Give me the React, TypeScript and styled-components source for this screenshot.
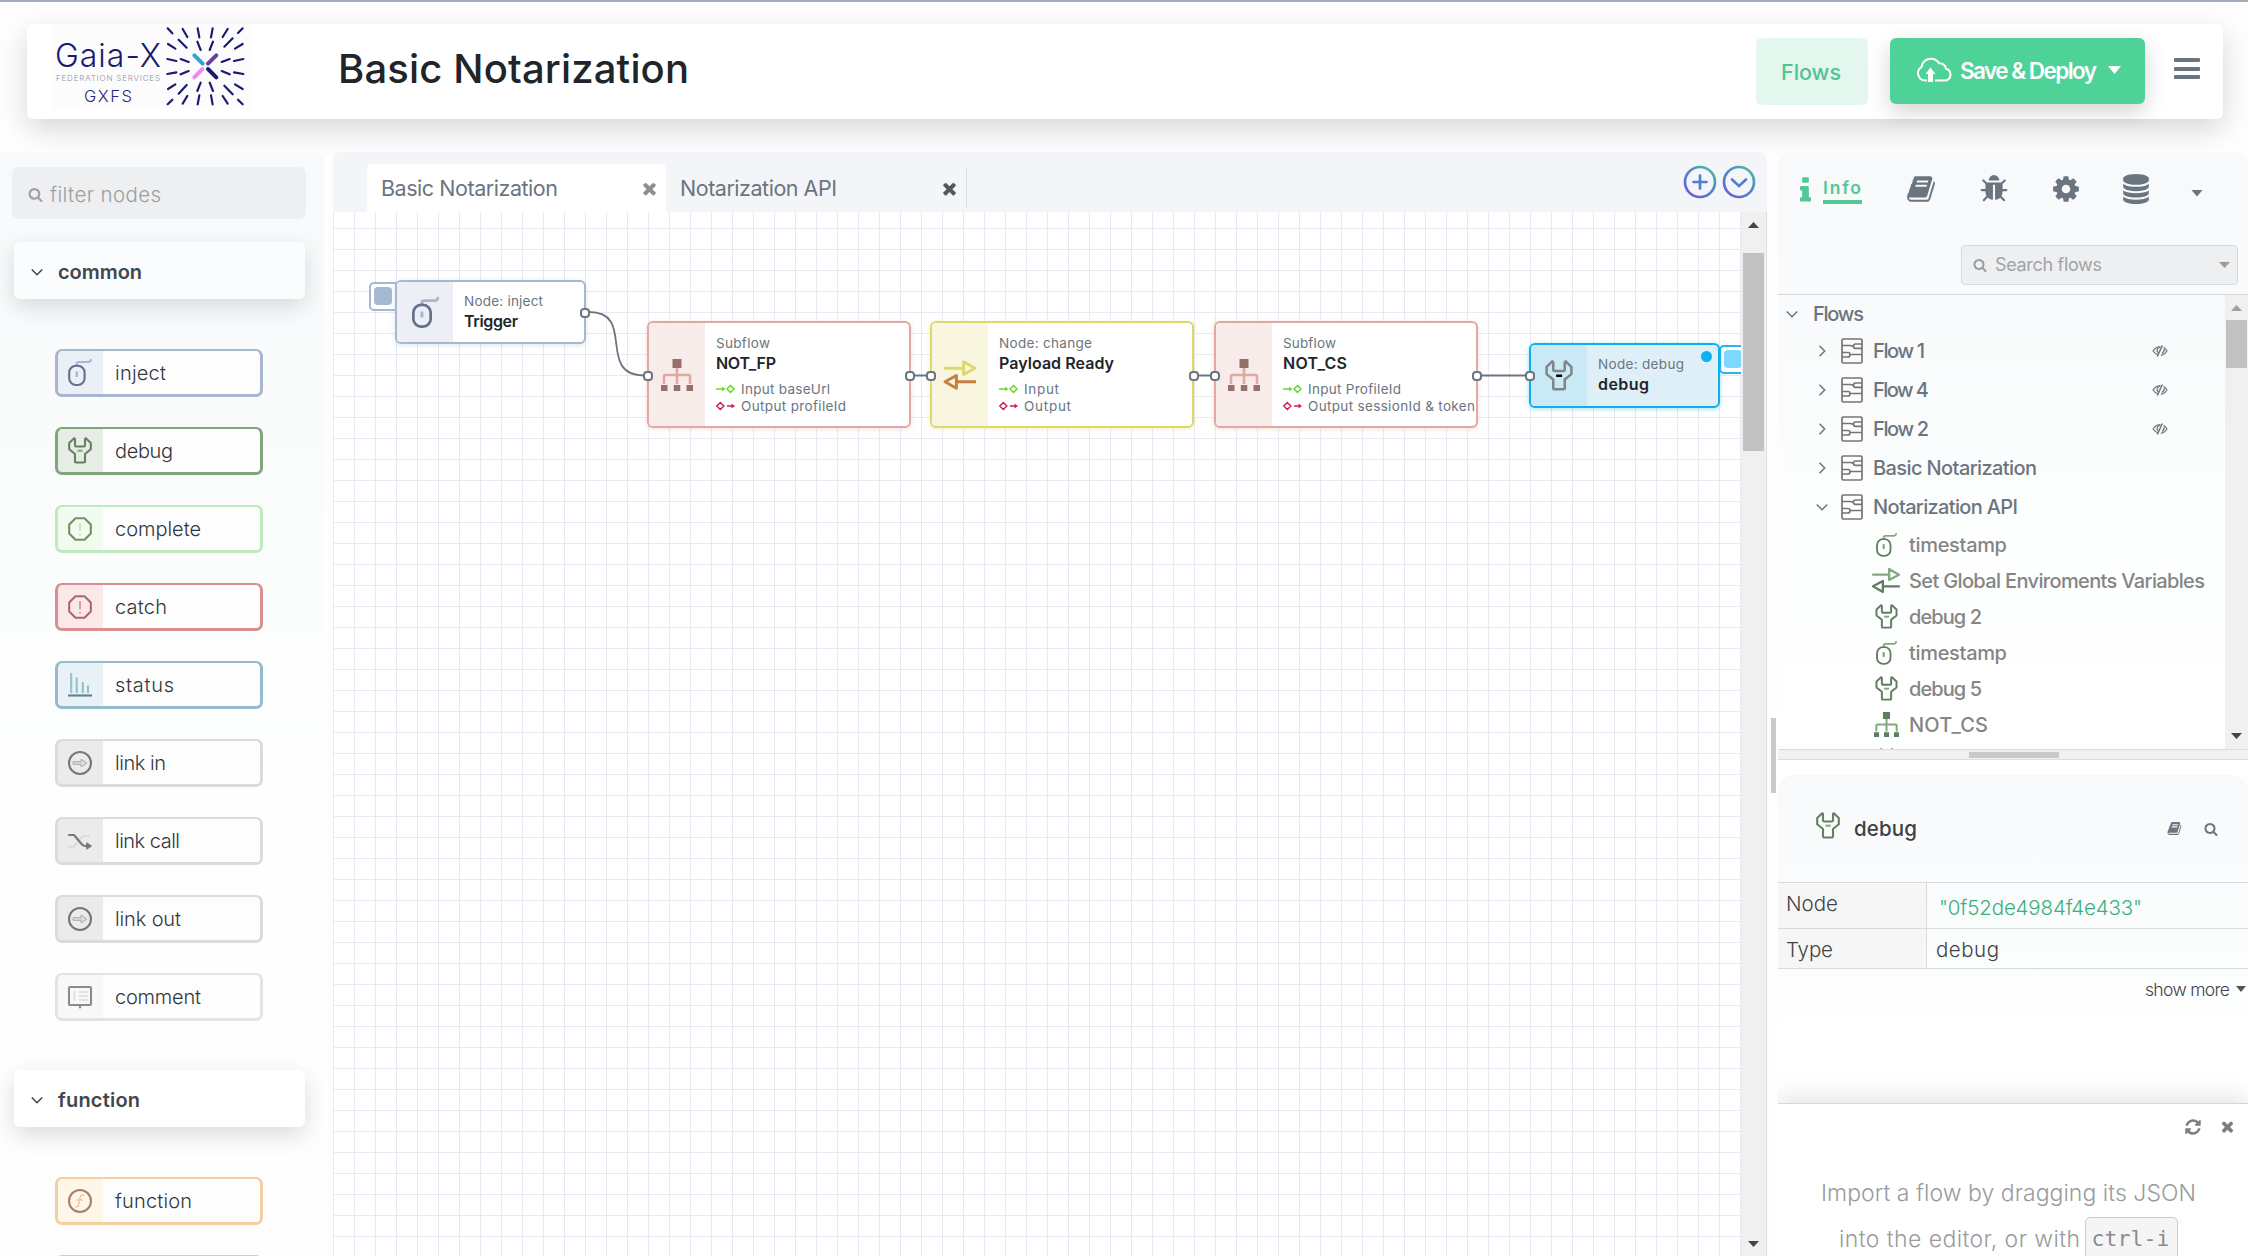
import React, { useLayoutEffect, useRef, useState } from "react";
import styled, { createGlobalStyle } from "styled-components";

const sans = `Inter, "Noto Sans", "Open Sans", sans-serif`;
const slate = "#6b757f";
const green = "#52c894";

const Global = createGlobalStyle`
  *, *::before, *::after { box-sizing: border-box; }
  body { margin: 0; background: #fff; font-family: ${sans}; overflow: hidden; }
`;

/* ---------- text that tracks itself to a given width ---------- */

const TextSpan = styled.span<{ $size: number; $weight: number; $color: string; $mt: number }>`
  display: inline-block;
  flex: none;
  white-space: pre;
  font-size: ${(p) => p.$size}px;
  line-height: ${(p) => Math.round(p.$size * 1.2)}px;
  font-weight: ${(p) => p.$weight};
  color: ${(p) => p.$color};
  margin-top: ${(p) => p.$mt}px;
`;

type LabelProps = { children: string; w: number; size: number; weight?: number; color?: string; mt?: number };

function Label({ children, w, size, weight = 400, color = slate, mt = 0 }: LabelProps) {
  const ref = useRef<HTMLSpanElement>(null);
  const [tracking, setTracking] = useState(0);
  useLayoutEffect(() => {
    const el = ref.current;
    if (!el) return;
    el.style.letterSpacing = "0px";
    const natural = el.getBoundingClientRect().width;
    setTracking((w - natural) / Math.max(1, children.length - 1));
    el.style.letterSpacing = "";
  }, [children, w, size, weight]);
  return (
    <TextSpan ref={ref} $size={size} $weight={weight} $color={color} $mt={mt}
      style={{ letterSpacing: tracking, marginRight: -tracking }}>
      {children}
    </TextSpan>
  );
}

/* ---------- icons ---------- */

const glyphs = {
  book: "M1703 478q40 57 18 129l-275 906q-19 64-76.5 107.5t-122.5 43.5h-923q-77 0-148.5-53.5t-99.5-131.5q-24-67-2-127 0-4 3-27t4-37q1-8-3-21.5t-3-19.5q2-11 8-21t16.5-23.500 16.5-23.500q23-38 45-91.500t30-91.500q3-10 .5-30t-.5-28q3-11 17-28t17-23q21-36 42-92t25-90q1-9-2.500-32t.5-28q4-13 22-30.500t22-22.500q19-26 42.500-84.500t27.500-96.500q1-8-3-25.500t-2-26.500q2-8 9-18t18-23 17-21q8-12 16.500-30.500t15-35 16-36 19.500-32 26.500-23.500 36-11.500 47.500 5.500l-1 3q38-9 51-9h761q74 0 114 56t18 130l-274 906q-36 119-71.500 153.500t-128.500 34.500h-869q-27 0-38 15-11 16-1 43 24 70 144 70h923q29 0 56-15.500t35-41.500l300-987q7-22 5-57 38 15 59 43zm-1064 2q-4 13 2 22.500t20 9.500h608q13 0 25.500-9.500t16.500-22.500l21-64q4-13-2-22.500t-20-9.500h-608q-13 0-25.500 9.500t-16.500 22.500zm-83 256q-4 13 2 22.500t20 9.500h608q13 0 25.500-9.500t16.500-22.500l21-64q4-13-2-22.500t-20-9.500h-608q-13 0-25.500 9.500t-16.500 22.500z",
  bug: "M1696 960q0 26-19 45t-45 19h-224q0 171-67 290l208 209q19 19 19 45t-19 45q-18 19-45 19t-45-19l-198-197q-5 5-15 13t-42 28.500-65 36.500-82 29-97 13v-896h-128v896q-51 0-101.500-13.500t-87-33-66-39-43.500-32.500l-15-14-183 207q-20 21-48 21-24 0-43-16-19-18-20.500-44.500t15.500-46.500l202-227q-58-114-58-274h-224q-26 0-45-19t-19-45 19-45 45-19h224v-294l-173-173q-19-19-19-45t19-45 45-19 45 19l173 173h844l173-173q19-19 45-19t45 19 19 45-19 45l-173 173v294h224q26 0 45 19t19 45zm-480-576h-640q0-133 93.500-226.500t226.500-93.500 226.500 93.500 93.500 226.500z",
  cog: "M1152 896q0-106-75-181t-181-75-181 75-75 181 75 181 181 75 181-75 75-181zm512-109v222q0 12-8 23t-20 13l-185 28q-19 54-39 91 35 50 107 138 10 12 10 25t-9 23q-27 37-99 108t-94 71q-12 0-26-9l-138-108q-44 23-91 38-16 136-29 186-7 28-36 28h-222q-14 0-24.500-8.500t-11.500-21.500l-28-184q-49-16-90-37l-141 107q-10 9-25 9-14 0-25-11-126-114-165-168-7-10-7-23 0-12 8-23 15-21 51-66.500t54-70.500q-27-50-41-99l-183-27q-13-2-21-12.500t-8-23.500v-222q0-12 8-23t19-13l186-28q14-46 39-92-40-57-107-138-10-12-10-24 0-10 9-23 26-36 98.500-107.500t94.500-71.500q13 0 26 10l138 107q44-23 91-38 16-136 29-186 7-28 36-28h222q14 0 24.500 8.500t11.500 21.500l28 184q49 16 90 37l142-107q9-9 24-9 13 0 25 10 129 119 165 170 7 8 7 22 0 12-8 23-15 21-51 66.500t-54 70.500q26 50 41 98l183 28q13 2 21 12.500t8 23.500z",
  database: "M896 768q237 0 443-43t325-127v170q0 69-103 128t-280 93.500-385 34.500-385-34.500-280-93.500-103-128v-170q119 84 325 127t443 43zm0 768q237 0 443-43t325-127v170q0 69-103 128t-280 93.500-385 34.500-385-34.500-280-93.500-103-128v-170q119 84 325 127t443 43zm0-384q237 0 443-43t325-127v170q0 69-103 128t-280 93.500-385 34.500-385-34.500-280-93.500-103-128v-170q119 84 325 127t443 43zm0-1152q208 0 385 34.500t280 93.500 103 128v128q0 69-103 128t-280 93.500-385 34.500-385-34.500-280-93.500-103-128v-128q0-69 103-128t280-93.500 385-34.500z",
  times: "M1490 1322q0 40-28 68l-136 136q-28 28-68 28t-68-28l-294-294-294 294q-28 28-68 28t-68-28l-136-136q-28-28-28-68t28-68l294-294-294-294q-28-28-28-68t28-68l136-136q28-28 68-28t68 28l294 294 294-294q28-28 68-28t68 28l136 136q28 28 28 68t-28 68l-294 294 294 294q28 28 28 68z",
  search: "M1216 832q0-185-131.500-316.500t-316.500-131.500-316.500 131.500-131.500 316.500 131.500 316.500 316.500 131.500 316.500-131.500 131.500-316.500zm512 832q0 52-38 90t-90 38q-54 0-90-38l-343-342q-179 124-399 124-143 0-273.500-55.500t-225-150-150-225-55.500-273.500 55.500-273.500 150-225 225-150 273.500-55.500 273.500 55.500 225 150 150 225 55.500 273.500q0 220-124 399l343 343q37 37 37 90z",
  info: "M1216 1344v128q0 26-19 45t-45 19h-512q-26 0-45-19t-19-45v-128q0-26 19-45t45-19h64v-384h-64q-26 0-45-19t-19-45v-128q0-26 19-45t45-19h384q26 0 45 19t19 45v576h64q26 0 45 19t19 45zm-128-1152v192q0 26-19 45t-45 19h-256q-26 0-45-19t-19-45v-192q0-26 19-45t45-19h256q26 0 45 19t19 45z",
  refresh: "M1639 1056q0 5-1 7-64 268-268 434.500t-478 166.500q-146 0-282.500-55t-243.500-157l-129 129q-19 19-45 19t-45-19-19-45v-448q0-26 19-45t45-19h448q26 0 45 19t19 45-19 45l-137 137q71 66 161 102t187 36q134 0 250-65t186-179q11-17 53-117 8-23 30-23h192q13 0 22.500 9.500t9.500 22.500zm25-800v448q0 26-19 45t-45 19h-448q-26 0-45-19t-19-45 19-45l138-138q-148-137-349-137-134 0-250 65t-186 179q-11 17-53 117-8 23-30 23h-199q-13 0-22.500-9.500t-9.500-22.500v-7q65-268 270-434.500t480-166.500q146 0 284 55.500t245 156.500l130-129q19-19 45-19t45 19 19 45z",
};

const Svg = styled.svg`
  display: block;
  flex: none;
  overflow: visible;
`;

function Glyph({ name, size, color = slate }: { name: keyof typeof glyphs; size: number; color?: string }) {
  return (
    <Svg width={size} height={size} viewBox="0 0 1792 1792" fill={color}>
      <path d={glyphs[name]} />
    </Svg>
  );
}

const Caret = styled.i<{ $w: number; $h: number; $color: string; $up?: boolean }>`
  flex: none;
  width: ${(p) => p.$w}px;
  height: ${(p) => p.$h}px;
  background: ${(p) => p.$color};
  clip-path: ${(p) => (p.$up ? "polygon(0 100%, 100% 100%, 50% 0)" : "polygon(0 0, 100% 0, 50% 100%)")};
`;

const Chevron = ({ open, color = slate }: { open: boolean; color?: string }) => (
  <Svg width="12" height="12" viewBox="0 0 12 12" fill="none" stroke={color} strokeWidth="1.500">
    <path d={open ? "M.8 3.500 6 8.700 11.200 3.500" : "M3.500 .8 8.700 6 3.500 11.200"} />
  </Svg>
);

type Kind = "mouse" | "wrench" | "stop" | "bars" | "link" | "call" | "comment" | "func" | "tree" | "swap";

function NodeIcon({ kind, a, b, w = 24, h = 27, sw = 2.1 }: { kind: Kind; a: string; b: string; w?: number; h?: number; sw?: number }) {
  const boxes: Record<Kind, string> = {
    mouse: "0 0 24 27", wrench: "0 0 24 27", stop: "0 0 24 24", bars: "0 0 24 24", link: "0 0 24 24",
    call: "0 0 24 16", comment: "0 0 24 22", func: "0 0 24 24", tree: "0 0 32 32", swap: "0 0 31 28",
  };
  return (
    <Svg width={w} height={h} viewBox={boxes[kind]} fill="none" stroke={a} strokeWidth={sw} strokeLinejoin="round" strokeLinecap="round">
      {kind === "mouse" && (
        <>
          <path d="M8.800 6V4.500Q8.800 3 10.500 3H20Q22.500 3 23 .8" stroke={b} />
          <path d="M8.800 12.500v5.500" stroke={b} strokeWidth="2.600" strokeLinecap="butt" />
          <rect x="1.200" y="6.800" width="15.400" height="19.200" rx="6.800" />
        </>
      )}
      {kind === "wrench" && (
        <>
          <path d="M6.200 1.200 1.200 6v6.300L7 17v7.500q0 1 1 1h8q1 0 1-1V17l5.800-4.700V6l-5-4.800-.8.800v6.300q0 1.200-1.200 1.200H8.200Q7 9.500 7 8.300V2z" />
          <path d="M9.500 13.700h5.200" stroke={b} strokeLinecap="butt" />
        </>
      )}
      {kind === "stop" && (
        <>
          <path d="M7.500 1.200h9l6.300 6.300v9l-6.300 6.300h-9L1.200 16.500v-9z" />
          <path d="M12 6v8.500M12 17v1.700" stroke={b} strokeLinecap="butt" strokeWidth="1.700" />
        </>
      )}
      {kind === "bars" && (
        <>
          <path d="M3.200 0v20M8.700 4.500V20M14.800 9v11M20 12.500V20" stroke={b} strokeLinecap="butt" />
          <path d="M0 22.500h24" strokeLinecap="butt" />
        </>
      )}
      {kind === "link" && (
        <>
          <circle cx="12" cy="12" r="11" />
          <path d="M5.500 10.700h7.500V8l5.800 4-5.800 4v-2.700H5.500z" stroke={b} strokeWidth="1" fill="#dcdcdc" />
        </>
      )}
      {kind === "call" && (
        <>
          <path d="M1 14h4.500L13 5q2-2 4-2h4" stroke={b} />
          <path d="M1 2h5l8 9.500q1.500 1.500 3.500 1.500h3" />
          <path d="m19 10 4.500 3L19 16z" fill={a} strokeWidth="1" />
        </>
      )}
      {kind === "comment" && (
        <>
          <rect x="1" y="1" width="22" height="18" rx="1" />
          <path d="M12 19v2.500" />
          <path d="M6.300 5v10M11 6h9M11 10h9M11 14h9" stroke={b} strokeLinecap="butt" />
        </>
      )}
      {kind === "func" && (
        <>
          <circle cx="12" cy="12" r="11" />
          <path d="M15.500 6.200q-2.800-.8-3.300 2l-1.600 7.600q-.5 2.500-2.800 2M8.800 11h5.400" stroke={b} strokeWidth="1.600" />
        </>
      )}
      {kind === "tree" && (
        <>
          <path d="M16 9v16M3 25v-7.500Q3 16 4.500 16h23q1.500 0 1.500 1.500V25" stroke={b} strokeLinecap="butt" strokeWidth="2.600" />
          <path d="M11.500 0h9v9h-9zM0 26h6.500v6H0zM12.800 26h6.500v6h-6.500zM25.500 26H32v6h-6.500z" fill={a} stroke="none" />
        </>
      )}
      {kind === "swap" && (
        <>
          <path d="M0 7.500h18.500M19 1.200v12.300L30 7.500z" stroke={b} strokeLinecap="butt" />
          <path d="M31 20.500H12.500M12 14.500v12.300L1 20.500z" strokeLinecap="butt" />
        </>
      )}
    </Svg>
  );
}

const FlowIcon = () => (
  <Svg width="22" height="26" viewBox="0 0 22 26" fill="none" stroke="#757575" strokeWidth="1.700">
    <rect x="1" y="1" width="20" height="24" rx="1.200" />
    <path d="M1 7.500h8q1.500 0 3 .8M21 6h-6.500q-2 0-2 2.200t2 2.200H21M21 16.500H9.500M1 14.500h6q2 0 2 2.200t-2 2.300H1" />
  </Svg>
);

const EyeOff = () => (
  <Svg width="16" height="12" viewBox="0 0 16 12" fill="none" stroke={slate} strokeWidth="1.200">
    <path d="M6.500 10Q3 9.300 1 6q3-4.400 7.500-4.400M11.500 2.300Q13.800 3.500 15 6q-2.300 3.800-6.200 4.300" />
    <path d="M10.300 .5 5.300 11.500" strokeWidth="1.500" />
    <path d="M8 2.500Q4.800 3 5 6.200L6.500 8M12.300 4Q12.500 7 9.800 8.500" />
  </Svg>
);

const InPort = () => (
  <Svg width="19" height="10" viewBox="0 0 19 10" fill="none" stroke="#66d926" strokeWidth="1.500">
    <path d="M0 5h7M14.500 1.500 18 5l-3.500 3.500L11 5z" />
    <path d="M6 2.800 9.500 5 6 7.200z" fill="#66d926" stroke="none" />
  </Svg>
);
const OutPort = () => (
  <Svg width="19" height="10" viewBox="0 0 19 10" fill="none" stroke="#cc1f5c" strokeWidth="1.500">
    <path d="M11 5h6M4.300 1.500 7.800 5 4.300 8.500.8 5z" />
    <path d="M15.500 2.500 19 5l-3.500 2.500z" fill="#cc1f5c" stroke="none" />
  </Svg>
);

/* ---------- header ---------- */

const Page = styled.div`
  width: 2248px;
  height: 1256px;
  display: flex;
  flex-direction: column;
  overflow: hidden;
  border-top: 2px solid #a3afbf;
  background: #fefefe;
`;

const Header = styled.header`
  flex: none;
  display: flex;
  align-items: center;
  height: 95px;
  margin: 22px 25px 33px 27px;
  padding: 0 23px 0 24px;
  background: #fff;
  border-radius: 6px;
  box-shadow: 0 10px 30px rgba(0, 0, 0, 0.16);
`;

const LogoBox = styled.div`
  width: 201px;
  height: 86px;
  align-self: flex-start;
  display: flex;
  background: #fcfcfd;
  margin-right: 86px;
`;
const LogoWords = styled.div`
  width: 112px;
  padding: 13px 0 0 2px;
  display: flex;
  flex-direction: column;
  align-items: center;
`;

const rays = [
  "383 40 397 55", "428 42 442 66", "473 40 478 67", "518 40 513 67", "563 42 548 66", "608 40 594 54",
  "384 87 406 101", "416 74 440 98", "472 80 482 105", "519 80 509 105", "578 70 553 95", "608 87 585 101",
  "382 132 409 138", "422 132 446 141", "569 132 545 141", "610 132 582 138",
  "382 177 409 172", "422 178 446 168", "569 178 545 168", "610 177 582 172",
  "384 222 406 208", "416 236 440 210", "472 228 482 203", "519 228 509 203", "578 238 553 212", "608 222 585 208",
  "383 268 397 254", "428 266 442 243", "473 268 478 241", "518 268 513 241", "563 266 548 243", "608 268 594 254",
];

const Burst = () => (
  <Svg width="84" height="86" viewBox="369 27 252 258" fill="none" stroke="#1a1a72" strokeWidth="6.500" strokeLinecap="round">
    {rays.map((r) => (
      <path key={r} d={`M${r}`} />
    ))}
    <g strokeWidth="12">
      <path d="M463 121 488 146" stroke="#2aa5dc" />
      <path d="M529 121 504 146" stroke="#6f3fa0" />
      <path d="M463 187 487 162" stroke="#ef8cf0" />
      <path d="M504 162 529 187" />
    </g>
  </Svg>
);

const Grow = styled.div`
  flex: 1;
`;

const FlowsButton = styled.button`
  width: 112px;
  height: 67px;
  display: flex;
  align-items: center;
  justify-content: center;
  padding: 0 2px 0 0;
  border: 0;
  border-radius: 6px;
  background: #e3f7ee;
  font-family: inherit;
  margin-right: 22px;
`;

const DeployButton = styled.button`
  width: 255px;
  height: 66px;
  display: flex;
  align-items: center;
  border: 0;
  padding: 0 0 1px 27px;
  border-radius: 6px;
  background: #4fd298;
  font-family: inherit;
  box-shadow: 0 8px 22px rgba(0, 0, 0, 0.17);
  margin: 0 29px 2px 0;
  gap: 7px;
`;
const DeployCaret = styled(Caret)`
  margin-left: 4px;
`;

const Burger = styled.div`
  width: 26px;
  height: 21px;
  margin-bottom: 6px;
  display: flex;
  flex-direction: column;
  justify-content: space-between;
  i { height: 4px; background: ${slate}; border-radius: 1px; }
`;

/* ---------- palette ---------- */

const Main = styled.main`
  flex: 1;
  min-height: 0;
  display: flex;
`;

const Palette = styled.aside`
  flex: none;
  width: 324px;
  margin-right: 9px;
  border-radius: 0 8px 0 0;
  background: linear-gradient(#f7f9fb 0, #fbfdfc 420px, #fefefe 700px);
  overflow: hidden;
`;

const FilterBox = styled.div`
  margin: 15px 18px 23px 12px;
  height: 52px;
  display: flex;
  align-items: center;
  gap: 7px;
  padding: 2px 16px 0;
  border-radius: 7px;
  background: #eeeff1;
`;

const CategoryHead = styled.div<{ $fill: string }>`
  margin: 0 19px 50px 14px;
  height: 57px;
  display: flex;
  align-items: center;
  gap: 15px;
  padding: 2px 17px 0;
  border-radius: 6px;
  background: ${(p) => p.$fill};
  box-shadow: 0 8px 25px rgba(0, 0, 0, 0.14);
`;

const NodeList = styled.div`
  display: flex;
  flex-direction: column;
  gap: 30px;
  padding-left: 55px;
  margin-bottom: 49px;
`;

const PaletteNode = styled.div<{ $border: string; $tint: string }>`
  width: 208px;
  height: 48px;
  display: flex;
  align-items: center;
  border: solid ${(p) => p.$border};
  border-width: 2px 3px 3px;
  border-radius: 7px;
  background: linear-gradient(90deg, ${(p) => p.$tint} 45px, #fdfdfe 45px);
`;
const PaletteIcon = styled.div`
  width: 46px;
  height: 100%;
  display: flex;
  align-items: center;
  justify-content: center;
  padding-right: 2px;
  margin-right: 11px;
`;

type PItem = { name: string; w: number; kind: Kind; a: string; b: string; border: string; tint: string; h: number };
const common: PItem[] = [
  { name: "inject", w: 51, kind: "mouse", a: "#65708c", b: "#a8b9d0", border: "#a6b7cf", tint: "#ebeff6", h: 27 },
  { name: "debug", w: 58, kind: "wrench", a: "#63805f", b: "#87a980", border: "#82a67c", tint: "#e6ede5", h: 27 },
  { name: "complete", w: 86, kind: "stop", a: "#75915f", b: "#c0e8bf", border: "#bfeabf", tint: "#f1fbf0", h: 24 },
  { name: "catch", w: 52, kind: "stop", a: "#a96a68", b: "#dc8f92", border: "#d98f92", tint: "#fbe8e9", h: 24 },
  { name: "status", w: 59, kind: "bars", a: "#5f8291", b: "#95bfcd", border: "#93bccb", tint: "#e8f2f6", h: 24 },
  { name: "link in", w: 51, kind: "link", a: "#777", b: "#aaa", border: "#dbdbdb", tint: "#ebebeb", h: 24 },
  { name: "link call", w: 65, kind: "call", a: "#777", b: "#dcdcdc", border: "#dbdbdb", tint: "#ebebeb", h: 16 },
  { name: "link out", w: 66, kind: "link", a: "#777", b: "#aaa", border: "#dbdbdb", tint: "#ebebeb", h: 24 },
  { name: "comment", w: 86, kind: "comment", a: "#8b8b8f", b: "#e2e2e4", border: "#e3e3e3", tint: "#f8f8f9", h: 22 },
];
const functions: PItem[] = [
  { name: "function", w: 77, kind: "func", a: "#a87e6c", b: "#f4c999", border: "#f4cfa0", tint: "#fff6ea", h: 24 },
  { name: "", w: 0, kind: "swap", a: "#a87e6c", b: "#e2d96e", border: "#dcd877", tint: "#fbfae3", h: 24 },
];

function PaletteGroup({ title, w, items, fill }: { title: string; w: number; items: PItem[]; fill: string }) {
  return (
    <>
      <CategoryHead $fill={fill}>
        <Chevron open color="#3f444a" />
        <Label w={w} size={20} weight={600} color="#42474c">{title}</Label>
      </CategoryHead>
      <NodeList>
        {items.map((n, i) => (
          <PaletteNode key={i} $border={n.border} $tint={n.tint}>
            <PaletteIcon><NodeIcon kind={n.kind} a={n.a} b={n.b} h={n.h} /></PaletteIcon>
            {n.name && <Label w={n.w} size={20} weight={300} color="#33373b">{n.name}</Label>}
          </PaletteNode>
        ))}
      </NodeList>
    </>
  );
}

/* ---------- workspace ---------- */

const Workspace = styled.section`
  flex: none;
  width: 1434px;
  display: flex;
  flex-direction: column;
`;

const TabBar = styled.div`
  flex: none;
  height: 60px;
  display: flex;
  align-items: flex-end;
  padding-left: 34px;
  border-radius: 8px 8px 0 0;
  background: #f3f5f8;
`;

const Tab = styled.div<{ $active?: boolean }>`
  width: ${(p) => (p.$active ? 299 : 300)}px;
  height: 48px;
  display: flex;
  align-items: center;
  justify-content: space-between;
  padding: 0 7px 0 14px;
  border-radius: 5px 5px 0 0;
  background: ${(p) => (p.$active ? "#fff" : "transparent")};
`;
const TabLabel = styled.div`
  margin-top: -1px;
`;
const TabEdge = styled.i`
  width: 1px;
  height: 40px;
  margin-bottom: 4px;
  background: #dcdfe3;
`;
const TabActions = styled.div`
  margin-left: auto;
  margin-right: 11px;
  display: flex;
  gap: 5px;
  align-self: center;
`;

const CircleIcon = ({ d }: { d: string }) => (
  <Svg width="34" height="34" viewBox="0 0 34 34" fill="none" stroke="url(#ring)" strokeWidth="2.700">
    <defs>
      <linearGradient id="ring" x1="6" y1="32" x2="28" y2="2" gradientUnits="userSpaceOnUse">
        <stop offset="0" stopColor="#6a5fd6" />
        <stop offset=".55" stopColor="#4f86cc" />
        <stop offset="1" stopColor="#52b89f" />
      </linearGradient>
    </defs>
    <circle cx="17" cy="17" r="15" />
    <path d={d} stroke="#4f7fd0" strokeLinecap="round" />
  </Svg>
);

const CanvasRow = styled.div`
  flex: 1;
  min-height: 0;
  display: flex;
  border-right: 1px solid #dcdcde;
`;

const Canvas = styled.div`
  position: relative;
  width: 1408px;
  overflow: hidden;
  background-color: #fff;
  background-image: linear-gradient(90deg, #e9e9f6 1.400px, transparent 1.400px), linear-gradient(#e9e9f6 1.400px, transparent 1.400px);
  background-size: 21px 21px;
  background-position: 0 0, 0 16px;
`;

const VScroll = styled.div<{ $w: number }>`
  width: ${(p) => p.$w}px;
  flex: none;
  display: flex;
  flex-direction: column;
  align-items: center;
  background: #f0f0f0;
`;
const Thumb = styled.i<{ $h: number }>`
  width: 21px;
  height: ${(p) => p.$h}px;
  background: #c1c1c1;
`;
const Pad = styled.i<{ $h: number }>`
  height: ${(p) => p.$h}px;
`;

const FlowNode = styled.div<{ $x: number; $y: number; $w: number; $h: number; $border: string; $fill: string }>`
  position: absolute;
  left: ${(p) => p.$x}px;
  top: ${(p) => p.$y}px;
  width: ${(p) => p.$w}px;
  height: ${(p) => p.$h}px;
  display: flex;
  border: 2px solid ${(p) => p.$border};
  border-radius: 6px;
  background: ${(p) => p.$fill};
  box-shadow: 0 1px 5px ${(p) => p.$border}66;
  overflow: hidden;
`;
const NodeSide = styled.div<{ $tint: string; $shift: number }>`
  flex: none;
  width: 56px;
  display: flex;
  align-items: center;
  justify-content: center;
  padding: 0 ${(p) => p.$shift}px 0 0;
  background: ${(p) => p.$tint};
`;
const NodeBody = styled.div<{ $top: number }>`
  display: flex;
  flex-direction: column;
  align-items: flex-start;
  padding: ${(p) => p.$top}px 0 0 11px;
`;
const IoLine = styled.div`
  height: 17px;
  display: flex;
  align-items: center;
  gap: 6px;
`;
const IoGroup = styled.div`
  margin-top: 7px;
`;
const NodeButton = styled.div<{ $x: number; $y: number; $border: string; $inner: string }>`
  position: absolute;
  left: ${(p) => p.$x}px;
  top: ${(p) => p.$y}px;
  width: 44px;
  height: 29px;
  padding: 3px;
  border: 2px solid ${(p) => p.$border};
  border-radius: 5px;
  background: #fff;
  &::before {
    content: "";
    display: block;
    width: 18px;
    height: 18px;
    border-radius: 4px;
    background: ${(p) => p.$inner};
  }
`;
const Port = styled.i<{ $x: number; $y: number }>`
  position: absolute;
  left: ${(p) => p.$x - 5}px;
  top: ${(p) => p.$y - 5}px;
  width: 10px;
  height: 10px;
  border: 2px solid ${slate};
  border-radius: 4px;
  background: #fff;
`;
const Wires = styled.svg`
  position: absolute;
  left: 0;
  top: 0;
`;
const ChangedDot = styled.i`
  position: absolute;
  right: 6px;
  top: 6px;
  width: 11px;
  height: 11px;
  border-radius: 50%;
  background: #10b0f4;
`;

const dark = "#212529";

type Io = { text: string; w: number };
type SubProps = { x: number; kind: Kind; a: string; b: string; border: string; tint: string; type: string; tw: number; name: string; nw: number; input: Io; output: Io };

function BigNode(p: SubProps) {
  return (
    <FlowNode $x={p.x} $y={109} $w={264} $h={107} $border={p.border} $fill="#fff">
      <NodeSide $tint={p.tint} $shift={0}><NodeIcon kind={p.kind} a={p.a} b={p.b} w={32} h={32} sw={2.900} /></NodeSide>
      <NodeBody $top={12}>
        <Label w={p.tw} size={13.500}>{p.type}</Label>
        <Label w={p.nw} size={16} weight={600} color={dark} mt={3}>{p.name}</Label>
        <IoGroup>
          <IoLine><InPort /><Label w={p.input.w} size={13.500}>{p.input.text}</Label></IoLine>
          <IoLine><OutPort /><Label w={p.output.w} size={13.500}>{p.output.text}</Label></IoLine>
        </IoGroup>
      </NodeBody>
    </FlowNode>
  );
}

const pink = { kind: "tree" as Kind, a: "#977069", b: "#dfa9a0", border: "#e0aaa2", tint: "#f8eceb" };

/* ---------- sidebar ---------- */

const Gutter = styled.div`
  flex: none;
  width: 11px;
  padding: 566px 0 0 4px;
  i { display: block; width: 5px; height: 75px; background: #c9c9c9; }
`;

const Sidebar = styled.aside`
  flex: none;
  width: 470px;
  display: flex;
  flex-direction: column;
  border-radius: 12px 12px 0 0;
  background: linear-gradient(#f7f9fb 0, #f8fafb 140px, #fdfefe 380px, #fff 620px);
`;

const SideTabs = styled.div`
  flex: none;
  height: 93px;
  display: flex;
  align-items: flex-start;
  padding: 22px 0 0 12px;
`;
const SideTab = styled.div<{ $w: number; $mt?: number }>`
  flex: none;
  width: ${(p) => p.$w}px;
  height: 30px;
  margin-top: ${(p) => p.$mt ?? 0}px;
  display: flex;
  align-items: center;
`;
const ActiveTab = styled.div`
  width: 39px;
  height: 30px;
  margin-left: 5px;
  padding-top: 3px;
  border-bottom: 4px solid ${green};
`;

const SearchRow = styled.div`
  flex: none;
  display: flex;
  justify-content: flex-end;
  height: 50px;
  padding-right: 10px;
  border-bottom: 1px solid #d6d8da;
`;
const SearchBox = styled.div`
  width: 277px;
  height: 40px;
  display: flex;
  align-items: center;
  gap: 8px;
  padding: 0 7px 0 11px;
  border: 1px solid #d9dadc;
  border-radius: 4px;
  background: #eeeff0;
`;

const TreeRow = styled.div`
  flex: none;
  display: flex;
  height: 454px;
`;
const Tree = styled.div`
  flex: 1;
  overflow: hidden;
  padding-top: 1px;
`;
const TreeItem = styled.div<{ $level: number }>`
  height: ${(p) => [35.500, 39, 36][p.$level]}px;
  display: flex;
  align-items: center;
  padding-left: ${(p) => [8, 38, 94][p.$level]}px;
  padding-right: 57px;
`;
const Space = styled.i<{ $w: number }>`
  flex: none;
  width: ${(p) => p.$w}px;
`;
const IconSlot = styled.div`
  flex: none;
  width: 28px;
  margin-right: 9px;
  display: flex;
  justify-content: center;
`;

const Splitter = styled.div`
  flex: none;
  height: 11px;
  display: flex;
  align-items: center;
  padding-left: 191px;
  background: #f1f1f1;
  border: solid #dcdcdc;
  border-width: 1px 0;
  i { width: 90px; height: 6px; background: #c9c9c9; }
`;
const Details = styled.div`
  flex: none;
  margin-top: 15px;
  height: 328px;
  border-radius: 16px 16px 0 0;
  background: linear-gradient(#f8f9fb, #fcfdfd 190px, #fff 260px);
`;
const DetailsHead = styled.div`
  height: 107px;
  display: flex;
  align-items: center;
  padding: 0 30px 0 38px;
`;
const RaisedIcon = styled.div`
  padding-bottom: 6px;
`;
const Cells = styled.div<{ $h: number }>`
  height: ${(p) => p.$h}px;
  display: grid;
  grid-template-columns: 149px 1fr;
  border-top: 1px solid #d8dadb;
`;
const CellName = styled.div`
  display: flex;
  align-items: center;
  padding-left: 8px;
  background: #f6f6f7;
  border-right: 1px solid #d8dadb;
`;
const CellValue = styled.div<{ $pad: number }>`
  display: flex;
  align-items: center;
  padding-left: ${(p) => p.$pad}px;
`;
const ShowMore = styled.div`
  display: flex;
  justify-content: flex-end;
  align-items: center;
  gap: 6px;
  height: 41px;
  padding-right: 2px;
  border-top: 1px solid #d8dadb;
`;
const Tips = styled.div`
  flex: 1;
  min-height: 0;
  border-top: 1px solid #d6d6d6;
  background: #fff;
  box-shadow: 0 -6px 24px rgba(0, 0, 0, 0.11);
  clip-path: inset(-50px 0 0 0);
  overflow: hidden;
`;
const TipTools = styled.div`
  display: flex;
  justify-content: flex-end;
  align-items: center;
  gap: 17px;
  height: 45px;
  padding: 0 12px 0 0;
`;
const TipLine = styled.div<{ $mt: number; $h: number; $pad: number }>`
  display: flex;
  align-items: center;
  height: ${(p) => p.$h}px;
  margin-top: ${(p) => p.$mt}px;
  padding-left: ${(p) => p.$pad}px;
  gap: 5px;
`;
const Kbd = styled.kbd`
  width: 93px;
  height: 44px;
  display: flex;
  align-items: center;
  justify-content: center;
  padding: 0 2px 1px 0;
  border: 1px solid #ccc;
  border-radius: 5px;
  background: #f5f5f6;
  font-family: "DejaVu Sans Mono", "Liberation Mono", monospace;
`;

const flows = [
  { name: "Flow 1", w: 52, off: true, open: false },
  { name: "Flow 4", w: 56, off: true, open: false },
  { name: "Flow 2", w: 56, off: true, open: false },
  { name: "Basic Notarization", w: 164, off: false, open: false },
  { name: "Notarization API", w: 145, off: false, open: true },
];
const leaves: { name: string; w: number; kind: Kind; iw: number; ih: number }[] = [
  { name: "timestamp", w: 98, kind: "mouse", iw: 21, ih: 24 },
  { name: "Set Global Enviroments Variables", w: 296, kind: "swap", iw: 28, ih: 25 },
  { name: "debug 2", w: 73, kind: "wrench", iw: 23, ih: 25 },
  { name: "timestamp", w: 98, kind: "mouse", iw: 21, ih: 24 },
  { name: "debug 5", w: 73, kind: "wrench", iw: 23, ih: 25 },
  { name: "NOT_CS", w: 79, kind: "tree", iw: 25, ih: 25 },
  { name: "", w: 0, kind: "wrench", iw: 23, ih: 25 },
];

export default function App() {
  return (
    <Page>
      <Global />
      <Header>
        <LogoBox>
          <LogoWords>
            <Label w={106} size={32} weight={300} color="#1a1a72">Gaia-X</Label>
            <Label w={104} size={8} weight={300} color="#8f8fa8" mt={-2}>FEDERATION SERVICES</Label>
            <Label w={48} size={16.500} weight={300} color="#26267c" mt={3}>GXFS</Label>
          </LogoWords>
          <Burst />
        </LogoBox>
        <Label w={351} size={40} weight={500} color="#212529" mt={-5}>Basic Notarization</Label>
        <Grow />
        <FlowsButton><Label w={60} size={21.500} weight={500} color="#52c292">Flows</Label></FlowsButton>
        <DeployButton>
          <Svg width="36" height="24" viewBox="0 0 36 24" fill="none" stroke="#fff" strokeWidth="2">
            <path d="M10 22.500H8.500A7.300 7.300 0 0 1 4.500 9 9.600 9.600 0 0 1 22 5.200a6.500 6.500 0 0 1 7 5.600 6 6 0 0 1-.5 11.700H18" />
            <path d="M13.500 9.500 18.500 16H16v8h-5v-8H8.500z" fill="#fff" stroke="none" />
          </Svg>
          <Label w={137} size={22.500} weight={600} color="#fff">Save &amp; Deploy</Label>
          <DeployCaret $w={13} $h={8} $color="#fff" />
        </DeployButton>
        <Burger><i /><i /><i /></Burger>
      </Header>

      <Main>
        <Palette>
          <FilterBox>
            <Glyph name="search" size={15} color="#a0a2a5" />
            <Label w={111} size={20.500} weight={300} color="#9b9ea2">filter nodes</Label>
          </FilterBox>
          <PaletteGroup title="common" w={84} items={common} fill="#fbfcfd" />
          <PaletteGroup title="function" w={82} items={functions} fill="#ffffff" />
        </Palette>

        <Workspace>
          <TabBar>
            <Tab $active>
              <TabLabel><Label w={177} size={21.500} weight={400}>Basic Notarization</Label></TabLabel>
              <Glyph name="times" size={19} color="#8c8f92" />
            </Tab>
            <Tab>
              <TabLabel><Label w={157} size={21.500} weight={400}>Notarization API</Label></TabLabel>
              <Glyph name="times" size={19} color="#54585c" />
            </Tab>
            <TabEdge />
            <TabActions>
              <CircleIcon d="M17 10.500v13M10.500 17h13" />
              <CircleIcon d="m10 14.500 7 6.500 7-6.500" />
            </TabActions>
          </TabBar>
          <CanvasRow>
            <Canvas>
              <NodeButton $x={36} $y={70} $border="#a6b7cf" $inner="#a6b9d3" />
              <FlowNode $x={62} $y={68} $w={191} $h={64} $border="#a6b7cf" $fill="#fff">
                <NodeSide $tint="#ecf0f5" $shift={0}><NodeIcon kind="mouse" a="#65708c" b="#a6b7cf" w={27} h={31} sw={2.400} /></NodeSide>
                <NodeBody $top={11}>
                  <Label w={79} size={13.500}>Node: inject</Label>
                  <Label w={54} size={16} weight={600} color={dark} mt={3}>Trigger</Label>
                </NodeBody>
              </FlowNode>
              <BigNode {...pink} x={314} type="Subflow" tw={54} name="NOT_FP" nw={60}
                input={{ text: "Input baseUrl", w: 89 }} output={{ text: "Output profileId", w: 105 }} />
              <BigNode x={597} kind="swap" a="#c67f41" b="#dbd96f" border="#dbd96d" tint="#f8f6df"
                type="Node: change" tw={93} name="Payload Ready" nw={115}
                input={{ text: "Input", w: 35 }} output={{ text: "Output", w: 47 }} />
              <BigNode {...pink} x={881} type="Subflow" tw={53} name="NOT_CS" nw={64}
                input={{ text: "Input ProfileId", w: 93 }} output={{ text: "Output sessionId & token", w: 167 }} />
              <NodeButton $x={1386} $y={133} $border="#2bb4ea" $inner="#7cd8fd" />
              <FlowNode $x={1196} $y={131} $w={191} $h={64.500} $border="#12aeea" $fill="#dfeff7">
                <NodeSide $tint="#c9e9f7" $shift={0}><NodeIcon kind="wrench" a="#7f8589" b="#000" w={28} h={31} sw={2.200} /></NodeSide>
                <NodeBody $top={11}>
                  <Label w={86} size={13.500}>Node: debug</Label>
                  <Label w={51} size={16} weight={600} color={dark} mt={3}>debug</Label>
                </NodeBody>
                <ChangedDot />
              </FlowNode>
              <Wires width="1408" height="1044" fill="none" stroke={slate} strokeWidth="1.800">
                <path d="M256 100C304 100 262 163.500 312 163.500" />
                <path d="M578 163.500h20M861 163.500h21M1144 163.500h52" />
              </Wires>
              <Port $x={252} $y={101} />
              {[315, 577, 598, 861, 882, 1144, 1197].map((x) => <Port key={x} $x={x} $y={164} />)}
            </Canvas>
            <VScroll $w={25}>
              <Pad $h={10} />
              <Caret $w={11} $h={6} $color="#444" $up />
              <Pad $h={25} />
              <Thumb $h={198} />
              <Grow />
              <Caret $w={11} $h={6} $color="#444" />
              <Pad $h={9} />
            </VScroll>
          </CanvasRow>
        </Workspace>

        <Gutter><i /></Gutter>

        <Sidebar>
          <SideTabs>
            <SideTab $w={28} $mt={1}><Glyph name="info" size={31} color={green} /></SideTab>
            <ActiveTab><Label w={38} size={17.500} weight={600} color={green}>Info</Label></ActiveTab>
            <Space $w={44} />
            <SideTab $w={73}><Glyph name="book" size={30} /></SideTab>
            <SideTab $w={72}><Glyph name="bug" size={30} /></SideTab>
            <SideTab $w={70}><Glyph name="cog" size={30} /></SideTab>
            <SideTab $w={70}><Glyph name="database" size={30} /></SideTab>
            <SideTab $w={12} $mt={4}><Caret $w={12} $h={7} $color={slate} /></SideTab>
          </SideTabs>
          <SearchRow>
            <SearchBox>
              <Glyph name="search" size={14} color="#9a9c9e" />
              <Label w={107} size={18} weight={400} color="#a2a4a7">Search flows</Label>
              <Grow />
              <Caret $w={11} $h={6} $color="#9a9a9a" />
            </SearchBox>
          </SearchRow>
          <TreeRow>
            <Tree>
              <TreeItem $level={0}>
                <Chevron open /><Space $w={15} /><Label w={51} size={20} weight={500}>Flows</Label>
              </TreeItem>
              {flows.map((f) => (
                <TreeItem key={f.name} $level={1}>
                  <Chevron open={f.open} /><Space $w={13} /><FlowIcon /><Space $w={10} />
                  <Label w={f.w} size={20} weight={500}>{f.name}</Label>
                  <Grow />
                  {f.off && <EyeOff />}
                </TreeItem>
              ))}
              {leaves.map((l, i) => (
                <TreeItem key={i} $level={2}>
                  <IconSlot><NodeIcon kind={l.kind} a="#5f7d5f" b="#84a97f" w={l.iw} h={l.ih} sw={l.kind === "swap" ? 2.600 : 2.100} /></IconSlot>
                  {l.name && <Label w={l.w} size={20} weight={500} color="#858585">{l.name}</Label>}
                </TreeItem>
              ))}
            </Tree>
            <VScroll $w={23}>
              <Pad $h={10} />
              <Caret $w={11} $h={6} $color="#a0a0a0" $up />
              <Pad $h={9} />
              <Thumb $h={48} />
              <Grow />
              <Caret $w={11} $h={6} $color="#444" />
              <Pad $h={10} />
            </VScroll>
          </TreeRow>
          <Splitter><i /></Splitter>
          <Details>
            <DetailsHead>
              <RaisedIcon><NodeIcon kind="wrench" a="#65805f" b="#87a980" w={24} h={27} /></RaisedIcon>
              <Space $w={14} />
              <Label w={63} size={20.500} weight={500} color="#3d4247">debug</Label>
              <Grow />
              <Glyph name="book" size={15} />
              <Space $w={22} />
              <Glyph name="search" size={14} />
            </DetailsHead>
            <Cells $h={46}>
              <CellName><Label w={52} size={20.500} weight={300} color="#3f4347" mt={-4}>Node</Label></CellName>
              <CellValue $pad={12}><Label w={203} size={20.500} weight={300} color="#3bb07b" mt={3}>"0f52de4984f4e433"</Label></CellValue>
            </Cells>
            <Cells $h={40}>
              <CellName><Label w={47} size={20.500} weight={300} color="#3f4347" mt={2}>Type</Label></CellName>
              <CellValue $pad={9}><Label w={63} size={20.500} weight={300} color="#3f4347" mt={2}>debug</Label></CellValue>
            </Cells>
            <ShowMore>
              <Label w={85} size={17.500} weight={300} color="#3f4347">show more</Label>
              <Caret $w={10} $h={6} $color="#555" />
            </ShowMore>
          </Details>
          <Tips>
            <TipTools>
              <Glyph name="refresh" size={18} color="#7d7d7d" />
              <Glyph name="times" size={17} color="#7d7d7d" />
            </TipTools>
            <TipLine $mt={29} $h={30} $pad={43}>
              <Label w={375} size={23} weight={300} color="#999b9d">Import a flow by dragging its JSON</Label>
            </TipLine>
            <TipLine $mt={9} $h={44} $pad={61}>
              <Label w={241} size={23} weight={300} color="#999b9d">into the editor, or with</Label>
              <Kbd><Label w={78} size={21.500} color="#8c8c8c">ctrl-i</Label></Kbd>
            </TipLine>
          </Tips>
        </Sidebar>
      </Main>
    </Page>
  );
}
